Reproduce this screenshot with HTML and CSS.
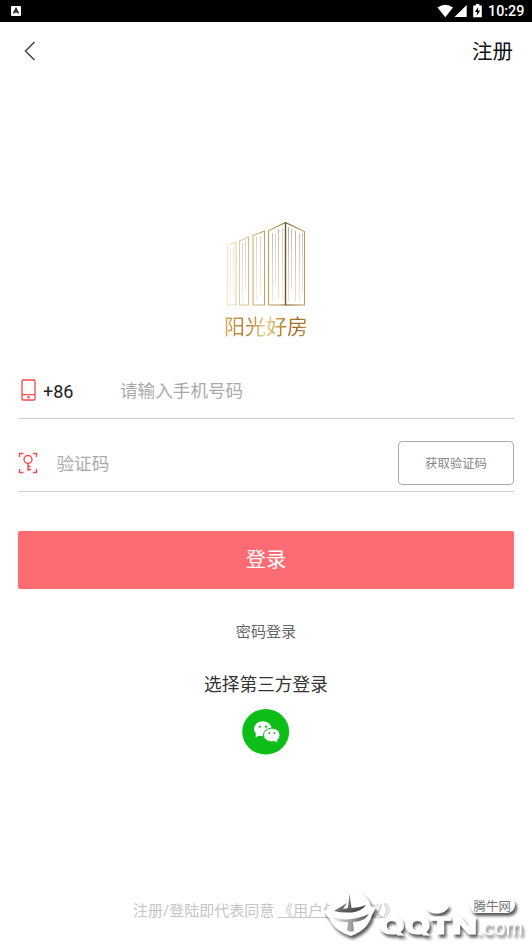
FILE: index.html
```html
<!DOCTYPE html>
<html lang="zh-CN">
<head>
<meta charset="utf-8">
<title>登录</title>
<link rel="stylesheet" href="styles.css">
</head>
<body>
<div class="screen">
  <div class="status">
    <svg class="status-app" width="10" height="10" viewBox="0 0 10 10"><rect width="10" height="10" rx="1" fill="#fff"/><path d="M2.6 7.4 5 2.5 7.4 7.4M3.5 5.9h3" fill="none" stroke="#111" stroke-width="1.4"/></svg>
    <div class="status-right">
      <svg width="47" height="16" viewBox="0 0 47 16" fill="#fff"><path d="M0.5 4.6Q8.5-1.1 16 4.6L8.3 14.2Z"/><path d="M17.5 14 29.7 2V14Z"/><path d="M38.8 1h3.4v1.5h2.600v11.700h-8.600V2.500h2.600Z"/><path d="M41.3 4 37.9 9h2.200l-.5 3.800L43.200 7.500H41Z" fill="#000"/></svg>
      <span class="clock">10:29</span>
    </div>
  </div>
  <header class="nav">
    <svg width="12" height="20" viewBox="0 0 12 20"><path d="M10.500 1 1.500 10l9 9" fill="none" stroke="#444" stroke-width="1.500"/></svg>
    <span>注册</span>
  </header>
  <div class="brand">
    <svg width="82" height="88" viewBox="0 0 82 88" fill="none">
      <defs>
        <linearGradient id="gold" gradientUnits="userSpaceOnUse" x1="0" y1="0" x2="82" y2="0"><stop offset="0" stop-color="#f1e8cc"/><stop offset=".3" stop-color="#d6bc80"/><stop offset=".65" stop-color="#b48d4c"/><stop offset=".76" stop-color="#75501f"/><stop offset="1" stop-color="#cda961"/></linearGradient>
        <linearGradient id="fine" x1="0" y1="0" x2="0" y2="1"><stop offset="0" stop-color="#9b8875"/><stop offset="1" stop-color="#e5dac8"/></linearGradient>
      </defs>
      <g stroke="url(#gold)" stroke-width="1.100">
        <path d="M2.500 86V26.500L11 23V86ZM14.500 86V22L23.500 18V86ZM28 86V16.500L39.500 12V86ZM43.500 86V11.500L60.500 3.500 79.500 12.500V86Z"/>
        <path d="M60.500 3.500V86" stroke="#70501f" stroke-width="1.400"/>
      </g>
      <g fill="url(#fine)">
        <path opacity=".22" d="M5 30h1v54H5zM8 28h1v50H8z"/>
        <path opacity=".4" d="M17 24h1v60h-1zM20 22h1v50h-1zM31 18h1v64h-1zM35 17h1v60h-1z"/>
        <path opacity=".6" d="M47 14h1v69h-1zM50 15h.7v52H50zM53 10h1v70h-1zM57 9h.8v73H57z"/>
        <path opacity=".7" d="M63 8h1v75h-1zM66 10h.8v60H66zM70 12h1v71h-1zM74 15h.8v66H74zM77 14h.7v60H77z"/>
      </g>
    </svg>
    <div class="brand-name">阳光好房</div>
  </div>
  <main class="form">
    <div class="field phone">
      <svg width="16" height="22" viewBox="0 0 16 22" fill="none" stroke="#ee4b4a" stroke-width="1.300"><rect x="1" y="1" width="13" height="20" rx="1.200"/><path d="M1 15.700h13"/><circle cx="7.500" cy="18.300" r=".6" fill="#ee4b4a"/></svg>
      <span class="code">+86</span>
      <span class="hint">请输入手机号码</span>
    </div>
    <div class="field verify">
      <svg width="20" height="22" viewBox="0 0 20 22" fill="none" stroke="#ee4b4a" stroke-width="1.400"><path d="M1.500 5V1.500h4M15 1.500h3.500V5M1.500 17v3.500h4M15 20.500h3.500V17"/><circle cx="10" cy="7.500" r="4"/><path d="M10 11.500v7.500M10 14.500h2.500M10 17.500h3"/></svg>
      <span class="hint">验证码</span>
      <div class="get-code">获取验证码</div>
    </div>
    <div class="login">登录</div>
  </main>
  <div class="password">密码登录</div>
  <div class="third">选择第三方登录</div>
  <svg class="wechat" width="48" height="46" viewBox="0 0 48 46"><ellipse cx="23.700" cy="22.800" rx="23.500" ry="22.800" fill="#0dbd18"/><g fill="#fff"><ellipse cx="20.800" cy="19.800" rx="8.800" ry="7.500"/><path d="m14 23.500-.5 5 5-2.500Z"/><ellipse cx="29.800" cy="26" rx="8.300" ry="6.900" stroke="#0dbd18"/><path d="m31 31.500 4.500 2-.8-4Z"/></g><g fill="#0dbd18"><circle cx="17.800" cy="17.700" r="1.100"/><circle cx="24" cy="17.700" r="1.100"/><circle cx="27.300" cy="24" r=".9"/><circle cx="32.400" cy="24" r=".9"/></g></svg>
  <footer class="terms">注册/登陆即代表同意 <span>《用户使用协议》</span></footer>
  <svg class="watermark" width="220" height="64" viewBox="0 0 220 64">
    <defs>
      <linearGradient id="sail" x1="0" y1="0" x2="1" y2="1"><stop offset="0" stop-color="#aaa"/><stop offset="1" stop-color="#333"/></linearGradient>
      <linearGradient id="hull" x1="0" y1="0" x2="1" y2="0"><stop offset="0" stop-color="#eee"/><stop offset="1" stop-color="#555"/></linearGradient>
    </defs>
    <g class="raised" fill="#fff">
      <path d="M12 30Q14 31 17 28Q21 12 38 10Q55 12 59 26Q61 28 64 27Q62 32 60 35Q56 50 39 56Q22 51 17 38Q13 35 12 30Z"/>
      <path d="M115 27Q117 25 123 25Q129 25 136 24.500Q138 28 132 32Q126 35 120 33Q115 31 115 27Z"/>
      <path d="M158 18H197Q204 20 203 26Q202 33 194 33H162Q157 30 158 18Z"/>
      <text class="mark" x="67" y="53.500" textLength="98" lengthAdjust="spacingAndGlyphs">QQTN</text>
      <text class="domain" x="165" y="54.500" textLength="46" lengthAdjust="spacingAndGlyphs">.com</text>
    </g>
    <path d="M22 31 35 23 31 29 36 28 37.500 14 39.500 28Q47 28 54 25Q50 31 40 32.500Q29 33 22 31Z" fill="url(#sail)"/>
    <path d="M20 37Q37 43 57 34Q52 42 41 42L42 51Q38 53 35 50L36 42Q25 43 20 37Z" fill="url(#hull)"/>
    <text class="site-name" x="161.500" y="30.500">腾牛网</text>
  </svg>
</div>
</body>
</html>
```
FILE: styles.css
```css
* { box-sizing: border-box; }
body { margin: 0; background: #fff; font-family: Roboto, "Noto Sans CJK SC", sans-serif; }
.screen { position: relative; width: 532px; height: 944px; overflow: hidden; display: flex; flex-direction: column; align-items: center; background: #fff; }
.screen > * { flex-shrink: 0; }
svg { display: block; flex-shrink: 0; }
.status { width: 100%; height: 22px; padding: 0 8px 0 11px; background: #000; color: #fff; display: flex; align-items: center; justify-content: space-between; }
.status-right { display: flex; align-items: center; gap: 4px; }
.clock { width: 36px; padding-top: 1px; font-size: 14.3px; font-weight: 500; line-height: 21px; white-space: nowrap; }
.nav { width: 100%; height: 57px; padding: 0 19px 0 24px; display: flex; align-items: center; justify-content: space-between; font-size: 20.5px; color: #111; }
.nav span { margin-top: -2px; }
.brand { margin-top: 140px; width: 84px; height: 124px; display: flex; flex-direction: column; align-items: center; }
.brand-name { margin-top: 5px; font-size: 21px; line-height: 30px; font-weight: 400; white-space: nowrap; color: transparent; background: linear-gradient(100deg, #d9b35a, #ae7c30 28%, #ead18a 50%, #ba8734 68%, #996724 85%, #d4ad5c); background-clip: text; -webkit-background-clip: text; }
.form { width: 496px; margin-top: 19px; }
.field { display: flex; align-items: center; border-bottom: 1px solid #d0d0d0; }
.phone { height: 57px; padding: 0 0 0 3px; }
.code { width: 77px; margin-left: 6px; padding-top: 3px; font-size: 18px; color: #222; }
.hint { margin-top: -2px; font-size: 17.6px; color: #aaa; }
.verify { height: 73px; padding-top: 16px; }
.verify .hint { margin-left: 18.5px; }
.get-code { width: 116px; height: 44px; margin-left: auto; border: 1px solid #aaa; border-radius: 4px; text-align: center; font-size: 12.4px; line-height: 43px; color: #888; }
.login { height: 58px; margin-top: 39px; border-radius: 2px; background: #ff6b73; color: #fff; font-size: 20.3px; line-height: 59px; text-align: center; }
.password { margin-top: 31px; font-size: 15.1px; line-height: 24px; color: #666; }
.third { margin-top: 27px; font-size: 17.7px; line-height: 28px; color: #333; }
.wechat { margin-top: 10px; }
.terms { width: 100%; margin-top: 144px; padding-left: 133px; font-size: 15px; line-height: 24px; color: #c5c5c5; white-space: nowrap; }
.terms span { text-decoration: underline; text-decoration-thickness: 1px; }
.watermark { position: absolute; left: 312px; top: 880px; }
.raised { filter: drop-shadow(2px 3px 1.5px rgba(0, 0, 0, .65)); }
.mark { font: 800 23px Inter, sans-serif; stroke: #fff; stroke-width: 1px; }
.domain { font: 21px Inter, sans-serif; }
.site-name { font: 12.5px "Noto Sans CJK SC", sans-serif; fill: #777; }
```
